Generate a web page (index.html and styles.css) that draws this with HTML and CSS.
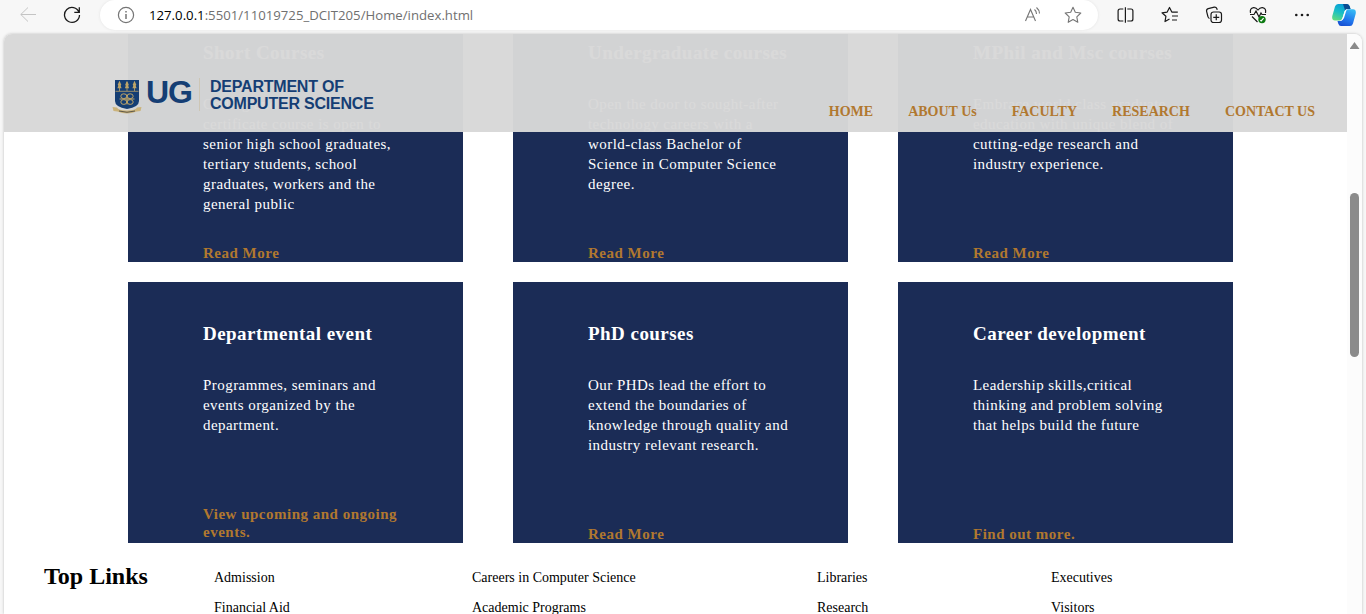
FILE: index.html
```html
<!DOCTYPE html>
<html lang="en">
<head>
<meta charset="utf-8">
<title>Department of Computer Science</title>
<link rel="stylesheet" href="styles.css">
</head>
<body>
<div class="toolbar">
  <svg class="back" width="16" height="16" viewBox="0 0 16 16" fill="none" stroke="#c4c4c4"><path d="M16 7.5H.8M8 .5L.8 7.5l7.2 7"/></svg>
  <svg class="reload" width="18" height="18" viewBox="0 0 18 18" fill="none" stroke="#1a1a1a" stroke-width="1.3"><path d="M16 6.2A7.5 7.5 0 1 0 16.5 9M16.3 1.2v5.1h-5"/></svg>
  <div class="address">
    <svg class="info" width="18" height="18" viewBox="0 0 18 18" fill="none" stroke="#757575" stroke-width="1.2"><circle cx="9" cy="9" r="7.6"/><path d="M9 8v5M9 5v1.6" stroke-width="1.5"/></svg>
    <span class="url"><b>127.0.0.1</b>:5501/11019725_DCIT205/Home/index.html</span>
    <svg class="read" width="18" height="18" viewBox="0 0 18 18" fill="none" stroke="#757575" stroke-width="1.1"><path d="M1.500 15L6.500 3.500 11.500 15M3.300 11h6.500M10.500 3.500q2 1.500 2 4.500M12.500 1.500q3 2.500 3 6"/></svg>
    <svg class="star" width="18" height="18" viewBox="0 0 18 18" fill="none" stroke="#757575" stroke-width="1.1" stroke-linejoin="round"><path d="M9 1.300l2.300 5 5.500.7-4 3.800 1 5.500L9 13.600l-4.800 2.700 1-5.500-4-3.800 5.500-.7z"/></svg>
  </div>
  <div class="tools">
    <svg width="18" height="18" viewBox="0 0 18 18" fill="none" stroke="#1a1a1a" stroke-width="1.2"><path d="M6.300 3H3Q1.100 3 1.100 5v8q0 2 1.900 2h3.300M10.300 3h3.700q1.900 0 1.900 2v8q0 2-1.900 2h-3.700M8.400 1.300v15.400"/></svg>
    <svg width="18" height="18" viewBox="0 0 18 18" fill="none" stroke="#1a1a1a" stroke-width="1.2" stroke-linejoin="round"><path d="M8.500 12.900L4 15.500l.9-5.200L1 6.800l5.200-.7L8.500 1.500l2.300 4.600h6M11 10h6M11 14h5"/></svg>
    <svg width="18" height="18" viewBox="0 0 18 18" fill="none" stroke="#1a1a1a" stroke-width="1.200"><path d="M4.500 12.500Q3.200 12 2.900 10.500L1.600 5.300Q1.200 3.200 3.200 2.600l6-1.500q2-.3 2.700 1.600l.3 1.200"/><rect x="6" y="6" width="10.500" height="10.500" rx="2.500"/><path d="M11.250 8.300v6M8.250 11.300h6"/></svg>
    <svg width="18" height="18" viewBox="0 0 18 18" fill="none" stroke="#1a1a1a" stroke-width="1.200"><path d="M1.500 7Q.5 2.300 4.500 1.700 7 1.400 9 4q2-2.600 4.500-2.300Q17.500 2.300 16.500 7M1 8.500h4L7 5l3 6 2-4 1 1.500h4M3 10.500l5.500 5.500"/><circle cx="13" cy="13.600" r="3.700" fill="#0d7a12" stroke="none"/><path d="M11.300 14.300l.9.600 2.400-2.700" stroke="#fff"/></svg>
    <svg width="18" height="18" viewBox="0 0 18 18" fill="#1a1a1a"><circle cx="3.300" cy="9" r="1.300"/><circle cx="9" cy="9" r="1.300"/><circle cx="14.700" cy="9" r="1.300"/></svg>
  </div>
  <svg class="copilot" width="24" height="22" viewBox="0 0 24 22">
    <defs>
      <linearGradient id="cl" x1=".6" y1="0" x2=".2" y2="1"><stop stop-color="#079bd8"/><stop offset=".5" stop-color="#19bfc6"/><stop offset="1" stop-color="#62dc7c"/></linearGradient>
      <linearGradient id="cr" x1=".7" y1="0" x2=".3" y2="1"><stop stop-color="#35b9f4"/><stop offset=".6" stop-color="#2176ed"/><stop offset="1" stop-color="#174fd1"/></linearGradient>
    </defs>
    <path d="M6 0h9q2 0 2.800 2.500L18.500 5h-3q-2.300 0-3 2.500L10.500 14q-.8 2.500-3 2.500H3Q-.5 16.500.3 12L3 2.500Q3.800 0 6 0z" fill="url(#cl)"/>
    <path d="M11 0h4q2 0 2.800 2.500L18.500 5h-3q-1.500 0-2.400 1.500z" fill="#0a4c91"/>
    <path d="M18 22H9q-2 0-2.800-2.500L5.500 17h2.800q2 0 2.700-2.500L13 7.500Q13.800 5.300 16 5.300h5q3.500 0 2.700 4.500L21 19.500q-.8 2.500-3 2.500z" fill="url(#cr)"/>
    <path d="M15.500 5q-2.300 0-3 2.500L10.500 14q-.8 2.500-2.500 2.700 3 0 4-2.700L14 7.500q.6-2 1.500-2.500z" fill="#fff"/>
  </svg>
</div>
<div class="window">
  <div class="page">
    <header class="site-header">
      <div class="logo">
        <svg class="crest" width="30" height="36" viewBox="0 0 30 36">
          <path d="M3 1h24v21q0 6-12 8Q3 28 3 22z" fill="#153e74"/>
          <g stroke="#bda468" fill="#bda468"><path d="M3.500 12.300h23" stroke-width=".8"/><path d="M7.500 3v9M15 3v9M22.500 3v9" stroke-width=".8"/><path d="M7.500 1.800l1.800 4-.6 1 .9 2.500h-4.200l.9-2.500-.6-1zM15 1.800l1.800 4-.6 1 .9 2.500h-4.200l.9-2.500-.6-1zM22.500 1.800l1.800 4-.6 1 .9 2.500h-4.200l.9-2.500-.6-1z" stroke="none"/></g>
          <g fill="none" stroke="#bda468" stroke-width="1"><ellipse cx="11.800" cy="17.200" rx="3" ry="2.400"/><ellipse cx="18.200" cy="17.200" rx="3" ry="2.400"/><ellipse cx="11.800" cy="23" rx="3" ry="2.400"/><ellipse cx="18.200" cy="23" rx="3" ry="2.400"/><path d="M7.500 20h15M15 15.500v10"/></g>
          <path d="M.5 28l4.500.5Q6 31.500 15 31.500T25 28.500l4.500-.5-1 4-4 .5Q20 34.500 15 34.500T5.500 32.500L1.500 32z" fill="#cbb37b"/>
          <path d="M7 32q8 2.500 16 0" fill="none" stroke="#5c5749" stroke-width="1"/>
        </svg>
        <span class="ug">UG</span>
        <span class="dept">DEPARTMENT OF<br>COMPUTER SCIENCE</span>
      </div>
      <nav class="nav"><a>HOME</a><a>ABOUT Us</a><a>FACULTY</a><a>RESEARCH</a><a>CONTACT US</a></nav>
    </header>
    <main class="cards">
      <article class="card"><h3>Short Courses</h3><p>Coding and<br>certificate course is open to<br>senior high school graduates,<br>tertiary students, school<br>graduates, workers and the<br>general public</p><a>Read More</a></article>
      <article class="card"><h3>Undergraduate courses</h3><p>Open the door to sought-after<br>technology careers with a<br>world-class Bachelor of<br>Science in Computer Science<br>degree.</p><a>Read More</a></article>
      <article class="card"><h3>MPhil and Msc courses</h3><p>Embrace world class graduate<br>education with unique blend of<br>cutting-edge research and<br>industry experience.</p><a>Read More</a></article>
      <article class="card two-line"><h3>Departmental event</h3><p>Programmes, seminars and<br>events organized by the<br>department.</p><a>View upcoming and ongoing<br>events.</a></article>
      <article class="card"><h3>PhD courses</h3><p>Our PHDs lead the effort to<br>extend the boundaries of<br>knowledge through quality and<br>industry relevant research.</p><a>Read More</a></article>
      <article class="card"><h3>Career development</h3><p>Leadership skills,critical<br>thinking and problem solving<br>that helps build the future</p><a>Find out more.</a></article>
    </main>
    <footer class="links">
      <h2>Top Links</h2>
      <ul><li>Admission</li><li>Financial Aid</li></ul>
      <ul><li>Careers in Computer Science</li><li>Academic Programs</li></ul>
      <ul><li>Libraries</li><li>Research</li></ul>
      <ul><li>Executives</li><li>Visitors</li></ul>
    </footer>
  </div>
  <div class="scrollbar"><i class="arrow"></i><i class="thumb"></i></div>
</div>
</body>
</html>
```
FILE: styles.css
```css
* { box-sizing: border-box; }
body { margin: 0; height: 614px; overflow: hidden; background: #f7f7f7; font-family: "Liberation Serif", "Times New Roman", serif; }
svg { display: block; flex: none; }
.toolbar { height: 34px; display: flex; align-items: flex-start; }
.back { margin: 7px 0 0 20px; }
.reload { margin: 6px 0 0 27px; }
.address { width: 998px; height: 30px; margin-left: 19px; padding-left: 17px; display: flex; background: #fff; border-radius: 15px; box-shadow: 0 0 3px #e3e3e3; }
.info { margin-top: 6px; }
.url { width: 866px; margin-left: 14px; font: 13.2px/30px "Open Sans", "Noto Sans", sans-serif; color: #707070; white-space: nowrap; }
.url b { font-weight: 400; color: #000; }
.read { margin: 6px 0 0 9px; }
.star { margin: 6px 0 0 22px; }
.tools { display: flex; gap: 26px; margin: 6px 0 0 19px; }
.copilot { margin: 4px 0 0 21px; }
.window { display: flex; width: 1358px; height: 580px; margin-left: 4px; overflow: hidden; background: #fff; border-radius: 8px 8px 0 0; box-shadow: 0 0 3px #bbb; }
.page { position: relative; width: 1343px; height: 580px; overflow: hidden; }
.site-header { position: absolute; top: 0; left: 0; width: 1343px; height: 98px; z-index: 1; display: flex; justify-content: space-between; padding: 44px 32px 0 108px; background: rgba(216, 216, 216, .974); }
.logo { display: flex; color: #153e74; font-family: "Liberation Sans", Arial, sans-serif; font-weight: 700; }
.crest { margin-top: 1px; }
.ug { width: 53px; margin-left: 4px; font-size: 32px; line-height: 29px; letter-spacing: -1px; }
.dept { height: 33px; padding-left: 10px; border-left: 1px solid #cdc6b5; font-size: 16px; line-height: 17px; letter-spacing: -.22px; white-space: nowrap; }
.nav { display: flex; gap: 35px; padding-top: 25px; font-size: 14px; line-height: 18px; font-weight: 700; color: #b1782f; white-space: nowrap; }
.cards { display: grid; grid-template-columns: repeat(3, 335px); grid-auto-rows: 261px; gap: 20px 50px; margin: -33px 0 0 124px; }
.card { display: flex; flex-direction: column; padding: 41px 0 0 75px; background: #1b2c56; color: #fff; white-space: nowrap; }
.two-line { padding-bottom: 2px; }
.card h3 { margin: 0; font-size: 19px; line-height: 22px; letter-spacing: .46px; }
.card p { margin: 30px 0 0; font-size: 15px; line-height: 20px; letter-spacing: .45px; }
.card a { margin-top: auto; font-size: 15px; line-height: 18px; font-weight: 700; letter-spacing: .5px; color: #b1782f; }
.links { display: grid; grid-template-columns: 170px 258px 345px 234px 200px; padding: 19px 0 0 40px; }
.links h2 { margin: 0; font-size: 24px; line-height: 28px; }
.links ul { margin: 1px 0 0; padding: 0; list-style: none; font-size: 14px; line-height: 30px; }
.scrollbar { width: 15px; background: #fcfcfc; }
.arrow { display: block; width: 10px; height: 7px; margin: 8px 0 0 2.5px; background: #8b8b8b; clip-path: polygon(50% 0, 100% 100%, 0 100%); }
.thumb { display: block; width: 9px; height: 164px; margin: 144px 0 0 3px; border-radius: 5px; background: #8b8b8b; }
```
